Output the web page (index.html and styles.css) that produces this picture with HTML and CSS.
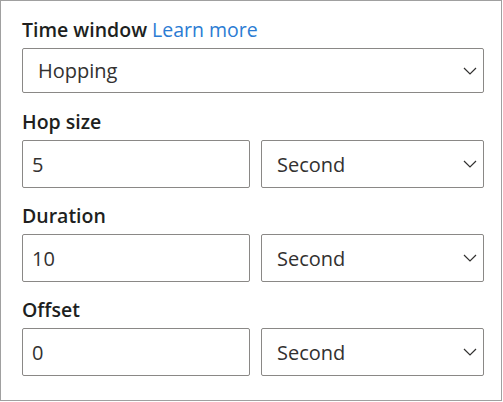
FILE: index.html
```html
<!DOCTYPE html>
<html>
<head>
<meta charset="utf-8">
<link rel="stylesheet" href="styles.css">
</head>
<body>
<div class="frame">
  <div class="label">Time window <a class="link" href="#">Learn more</a></div>
  <div class="select select-wide">
    <span class="value value-wide">Hopping</span>
    <svg class="chev" width="14" height="8" viewBox="0 0 14 8"><path d="M1 1 L7 7 L13 1" fill="none" stroke="#323130" stroke-width="1.2"/></svg>
  </div>

  <div class="label">Hop size</div>
  <div class="row">
    <div class="input"><span class="value">5</span></div>
    <div class="select"><span class="value value-sel">Second</span>
      <svg class="chev" width="14" height="8" viewBox="0 0 14 8"><path d="M1 1 L7 7 L13 1" fill="none" stroke="#323130" stroke-width="1.2"/></svg>
    </div>
  </div>

  <div class="label">Duration</div>
  <div class="row">
    <div class="input"><span class="value">10</span></div>
    <div class="select"><span class="value value-sel">Second</span>
      <svg class="chev" width="14" height="8" viewBox="0 0 14 8"><path d="M1 1 L7 7 L13 1" fill="none" stroke="#323130" stroke-width="1.2"/></svg>
    </div>
  </div>

  <div class="label">Offset</div>
  <div class="row">
    <div class="input"><span class="value">0</span></div>
    <div class="select"><span class="value value-sel">Second</span>
      <svg class="chev" width="14" height="8" viewBox="0 0 14 8"><path d="M1 1 L7 7 L13 1" fill="none" stroke="#323130" stroke-width="1.2"/></svg>
    </div>
  </div>
</div>
</body>
</html>
```
FILE: styles.css
```css
html, body {
  margin: 0;
  padding: 0;
  background: #ffffff;
}
.frame {
  box-sizing: border-box;
  width: 502px;
  height: 401px;
  border: 1px solid #a0a0a0;
  padding: 15px 17px 0 21px;
  font-family: "Open Sans", "Noto Sans", sans-serif;
  color: #323130;
}
.label {
  font-size: 19.5px;
  font-weight: 600;
  line-height: 26px;
  height: 26px;
  padding-top: 1px;
  margin-bottom: 5px;
  color: #201f1e;
  white-space: nowrap;
}
.link {
  font-weight: 400;
  color: #2b7cd3;
  text-decoration: none;
}
.select, .input {
  box-sizing: border-box;
  border: 1px solid #8a8886;
  border-radius: 2px;
  display: flex;
  align-items: center;
  background: #fff;
}
.select-wide {
  height: 45px;
  margin-bottom: 15px;
}
.row {
  display: grid;
  grid-template-columns: 228px 223px;
  column-gap: 11px;
  height: 48px;
  margin-bottom: 14px;
}
.value {
  font-size: 20px;
  padding-left: 9px;
  flex: 1;
}
.value-wide {
  padding-left: 15px;
}
.value-sel {
  padding-left: 15px;
}
.chev {
  margin-right: 6px;
}
```
